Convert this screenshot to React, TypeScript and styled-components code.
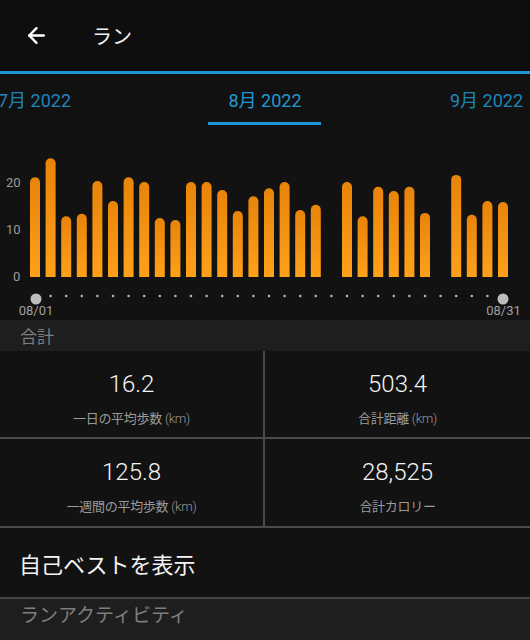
import React from 'react'
import styled, { createGlobalStyle } from 'styled-components'
import { ArrowLeft } from 'lucide-react'

const GlobalStyle = createGlobalStyle`
  html, body {
    margin: 0;
    padding: 0;
    background: #121212;
  }
  body {
    font-family: Roboto, "Noto Sans CJK JP", sans-serif;
    overflow: hidden;
  }
`

const Page = styled.div`
  width: 530px;
  height: 640px;
  display: flex;
  flex-direction: column;
  background: #121212;
  overflow: hidden;
`

const Header = styled.div`
  height: 71px;
  display: flex;
  align-items: center;
  padding-left: 24px;
  background: #0e0e0e;
  color: #fff;
  flex-shrink: 0;
`

const BackButton = styled.div`
  width: 25px;
  height: 25px;
  display: flex;
  align-items: center;
  justify-content: center;
  margin-right: 43px;
`

const Title = styled.div`
  font-family: "Noto Sans CJK JP", sans-serif;
  font-size: 20px;
  color: #f2f2f2;
`

const AccentLine = styled.div`
  height: 3px;
  background: #1c97d3;
  flex-shrink: 0;
`

const Tabs = styled.div`
  height: 54px;
  display: grid;
  grid-template-columns: 1fr 1fr 1fr;
  background: #111;
  flex-shrink: 0;
`

const Tab = styled.div<{ $align: 'start' | 'center' | 'end'; $active?: boolean }>`
  display: flex;
  flex-direction: column;
  align-items: ${p => (p.$align === 'start' ? 'flex-start' : p.$align === 'end' ? 'flex-end' : 'center')};
  padding-top: 17px;
  margin-left: ${p => (p.$align === 'start' ? '-2px' : '0')};
  margin-right: ${p => (p.$align === 'end' ? '7px' : '0')};
  font-size: 18px;
  color: ${p => (p.$active ? '#2597d0' : '#1f85ba')};
`

const TabLabel = styled.span`
  line-height: 20px;
  white-space: nowrap;
`

const TabUnderline = styled.div<{ $active?: boolean }>`
  width: 113px;
  height: 3px;
  margin-top: 11px;
  background: ${p => (p.$active ? '#1c97d3' : 'transparent')};
`

const ChartBox = styled.div`
  height: 192px;
  background: #121212;
  flex-shrink: 0;
`

const SectionBand = styled.div<{ $h: number; $size: number }>`
  height: ${p => p.$h}px;
  display: flex;
  align-items: ${p => (p.$size > 17 ? 'flex-start' : 'center')};
  padding-left: 20px;
  background: #1e1e1e;
  color: #7e7e7e;
  font-family: "Noto Sans CJK JP", sans-serif;
  font-size: ${p => p.$size}px;
  flex-shrink: 0;
  box-sizing: border-box;
  padding-top: ${p => (p.$size > 17 ? '1px' : '0')};
`

const StatsGrid = styled.div`
  display: grid;
  grid-template-columns: 263px 2px 265px;
  grid-template-rows: 86px 2px 87px 2px;
  background: #121212;
  flex-shrink: 0;
`

const HLine = styled.div`
  grid-column: 1 / span 3;
  background: #4a4a4a;
`

const VLine = styled.div`
  background: #4a4a4a;
`

const Stat = styled.div`
  display: flex;
  flex-direction: column;
  align-items: center;
  padding-top: 19px;
  box-sizing: border-box;
`

const StatValue = styled.div`
  font-family: Roboto, sans-serif;
  font-weight: 300;
  font-size: 24px;
  line-height: 28px;
  color: #f4f4f4;
`

const StatLabel = styled.div`
  margin-top: 12px;
  font-family: "Noto Sans CJK JP", sans-serif;
  font-size: 13px;
  line-height: 16px;
  color: #9a9a9a;
  letter-spacing: -0.3px;
`

const Unit = styled.span`
  font-family: Roboto, sans-serif;
  font-weight: 300;
  margin-left: 3px;
`

const LinkRow = styled.div`
  height: 69px;
  display: flex;
  align-items: center;
  padding-left: 19px;
  font-family: "Noto Sans CJK JP", sans-serif;
  font-size: 22px;
  color: #f4f4f4;
  border-bottom: 2px solid #444;
  flex-shrink: 0;
`

const data = [
  21, 25, 12.8, 13.3, 20.2, 16, 21, 20, 12.4, 12, 20, 20, 18.3, 13.9, 17, 18.7,
  20, 14.1, 15.2, 0, 20, 12.8, 19, 18.1, 19, 13.5, 0, 21.5, 13.1, 16, 15.8,
]

const BASE = 149
const UNIT = 4.75
const X0 = 30
const STEP = 15.6
const W = 10

function barPath(x: number, h: number) {
  const top = BASE - h
  const r = W / 2
  return `M${x},${BASE} V${top + r} A${r},${r} 0 0 1 ${x + W},${top + r} V${BASE} Z`
}

const RunChart: React.FC = () => (
  <svg width="530" height="192" viewBox="0 0 530 192">
    <defs>
      <linearGradient id="bar" x1="0" y1="0" x2="0" y2="1">
        <stop offset="0" stopColor="#e8840a" />
        <stop offset="1" stopColor="#ffa01a" />
      </linearGradient>
    </defs>
    <g fill="#9c9c9c" fontFamily="Roboto, sans-serif" fontSize="13">
      <text x="6" y="58.5">20</text>
      <text x="6" y="105.5">10</text>
      <text x="13" y="153">0</text>
    </g>
    {data.map((v, i) =>
      v > 0 ? <path key={i} d={barPath(X0 + i * STEP, v * UNIT)} fill="url(#bar)" /> : null
    )}
    {data.map((_, i) =>
      i > 0 && i < data.length - 1 ? (
        <circle key={i} cx={X0 + W / 2 + i * STEP} cy={168} r={1.3} fill="#b5b5b5" />
      ) : null
    )}
    <circle cx={36} cy={171} r={5.5} fill="#bdbdbd" />
    <circle cx={503} cy={171} r={5.5} fill="#bdbdbd" />
    <g fill="#a0a0a0" fontFamily="Roboto, sans-serif" fontSize="13" textAnchor="middle">
      <text x="36" y="187">08/01</text>
      <text x="503.5" y="187">08/31</text>
    </g>
  </svg>
)

export default function App() {
  return (
    <Page>
      <GlobalStyle />
      <Header>
        <BackButton>
          <ArrowLeft size={27} strokeWidth={2.3} color="#fff" />
        </BackButton>
        <Title>ラン</Title>
      </Header>
      <AccentLine />
      <Tabs>
        <Tab $align="start">
          <TabLabel>7月 2022</TabLabel>
          <TabUnderline />
        </Tab>
        <Tab $align="center" $active>
          <TabLabel>8月 2022</TabLabel>
          <TabUnderline $active />
        </Tab>
        <Tab $align="end">
          <TabLabel>9月 2022</TabLabel>
          <TabUnderline />
        </Tab>
      </Tabs>
      <ChartBox>
        <RunChart />
      </ChartBox>
      <SectionBand $h={31} $size={17}>合計</SectionBand>
      <StatsGrid>
        <Stat>
          <StatValue>16.2</StatValue>
          <StatLabel>一日の平均歩数<Unit>(km)</Unit></StatLabel>
        </Stat>
        <VLine />
        <Stat>
          <StatValue>503.4</StatValue>
          <StatLabel>合計距離<Unit>(km)</Unit></StatLabel>
        </Stat>
        <HLine />
        <Stat>
          <StatValue>125.8</StatValue>
          <StatLabel>一週間の平均歩数<Unit>(km)</Unit></StatLabel>
        </Stat>
        <VLine />
        <Stat>
          <StatValue>28,525</StatValue>
          <StatLabel>合計カロリー</StatLabel>
        </Stat>
        <HLine />
      </StatsGrid>
      <LinkRow>自己ベストを表示</LinkRow>
      <SectionBand $h={45} $size={19}>ランアクティビティ</SectionBand>
    </Page>
  )
}
